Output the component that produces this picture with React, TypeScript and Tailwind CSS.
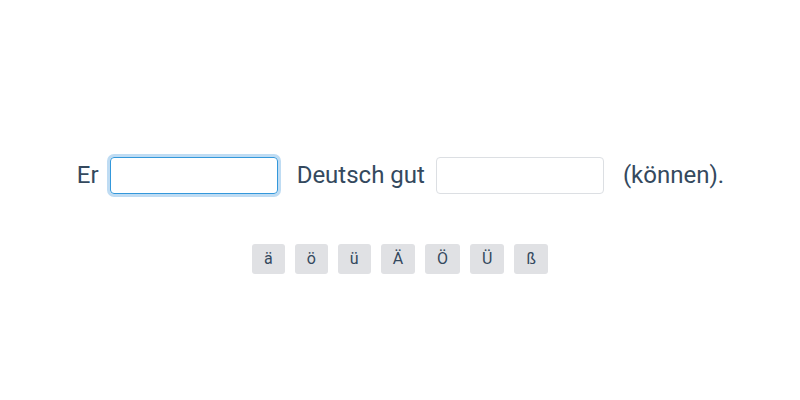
import React, { useState } from 'react';

const CHARS = ['ä', 'ö', 'ü', 'Ä', 'Ö', 'Ü', 'ß'];

const App: React.FC = () => {
  const [first, setFirst] = useState('');
  const [second, setSecond] = useState('');

  return (
    <div className="w-[800px] h-[400px] bg-white flex flex-col items-center font-['Roboto',sans-serif] text-[#34495e]">
      <div className="mt-[157px] ml-[1px] flex items-center text-[24px] leading-[37px]">
        <span>Er</span>
        <input
          autoFocus
          value={first}
          onChange={(e) => setFirst(e.target.value)}
          className="ml-[11px] mr-[19px] w-[168px] h-[37px] px-[6px] rounded-[4px] border border-[#3498db] ring-[3px] ring-[#bfdcf3] outline-none text-[18px] caret-[#34495e]"
        />
        <span>Deutsch gut</span>
        <input
          value={second}
          onChange={(e) => setSecond(e.target.value)}
          className="ml-[11px] mr-[19px] w-[168px] h-[37px] px-[6px] rounded-[4px] border border-[#dcdfe3] outline-none text-[18px]"
        />
        <span>(können).</span>
      </div>
      <div className="mt-[50px] flex gap-[10px]">
        {CHARS.map((c) => (
          <button
            key={c}
            className="h-[30px] px-[12px] rounded-[3px] bg-[#e0e1e4] text-[16px] text-[#34495e]"
          >
            {c}
          </button>
        ))}
      </div>
    </div>
  );
};

export default App;
